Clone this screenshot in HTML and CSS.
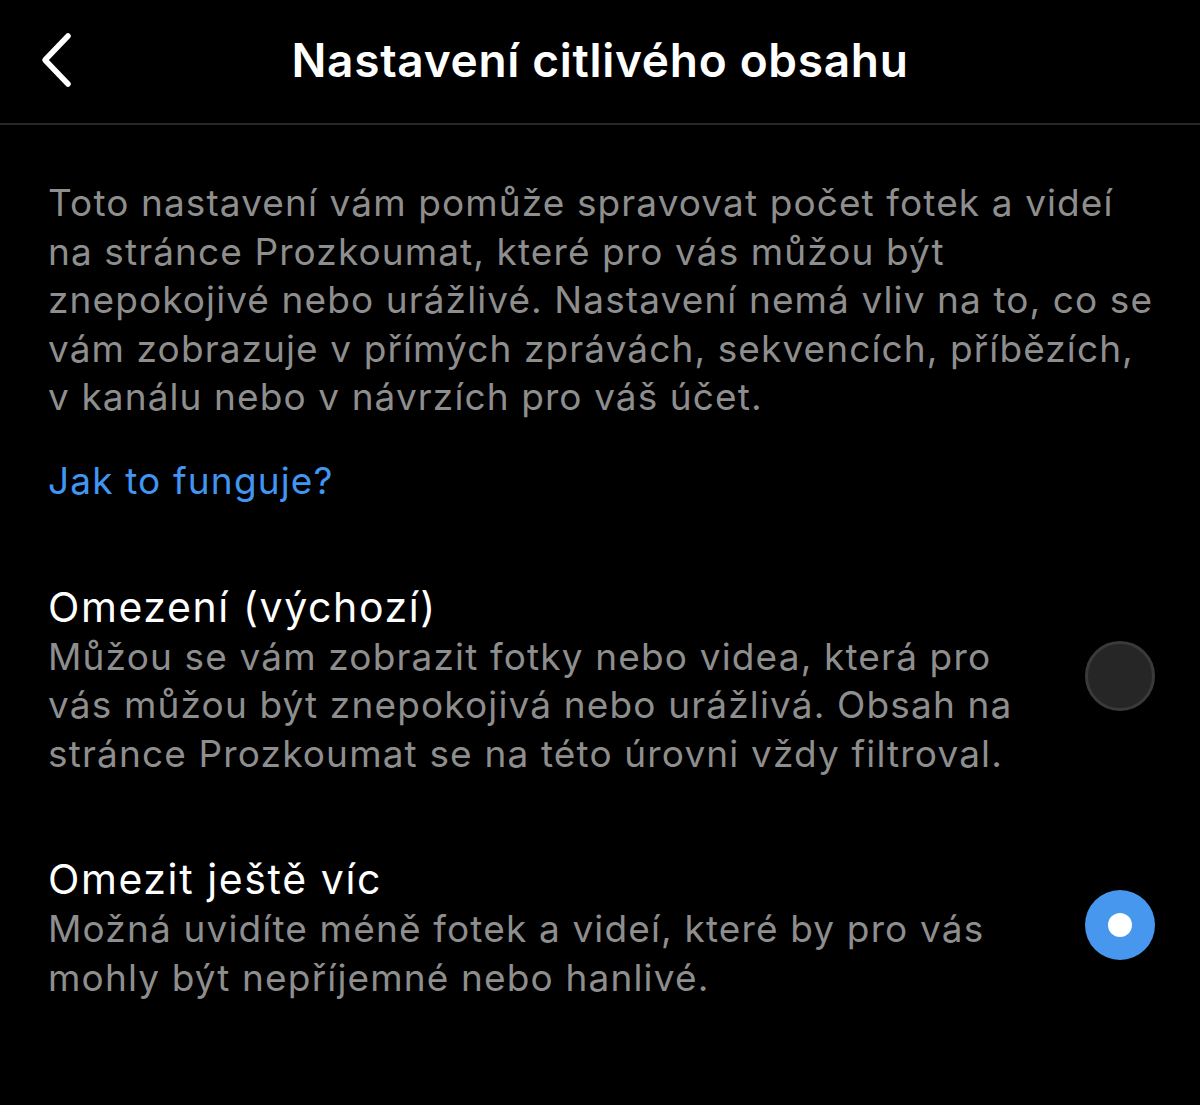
FILE: index.html
```html
<!DOCTYPE html>
<html lang="cs">
<head>
<meta charset="utf-8">
<link rel="stylesheet" href="styles.css">
</head>
<body>
<header class="topbar">
  <svg class="back" width="40" height="60" viewBox="0 0 40 60"><path d="M32 6 L9 30 L32 54" fill="none" stroke="#fff" stroke-width="5.5" stroke-linecap="round" stroke-linejoin="round"/></svg>
  <h1 class="title">Nastavení citlivého obsahu</h1>
</header>
<main class="content">
  <p class="intro">Toto nastavení vám pomůže spravovat počet fotek a videí<br>na stránce Prozkoumat, které pro vás můžou být<br>znepokojivé nebo urážlivé. Nastavení nemá vliv na to, co se<br>vám zobrazuje v přímých zprávách, sekvencích, příbězích,<br>v kanálu nebo v návrzích pro váš účet.</p>
  <a class="link">Jak to funguje?</a>
  <section class="option">
    <div class="option-text">
      <div class="option-title">Omezení (výchozí)</div>
      <div class="option-desc">Můžou se vám zobrazit fotky nebo videa, která pro<br>vás můžou být znepokojivá nebo urážlivá. Obsah na<br>stránce Prozkoumat se na této úrovni vždy filtroval.</div>
    </div>
    <div class="radio"></div>
  </section>
  <section class="option option-second">
    <div class="option-text">
      <div class="option-title">Omezit ještě víc</div>
      <div class="option-desc">Možná uvidíte méně fotek a videí, které by pro vás<br>mohly být nepříjemné nebo hanlivé.</div>
    </div>
    <div class="radio radio-on"></div>
  </section>
</main>
</body>
</html>
```
FILE: styles.css
```css
html, body {
  margin: 0;
  padding: 0;
  background: #000;
  height: 100%;
}
body {
  font-family: Inter, "Noto Sans", sans-serif;
  color: #fff;
  width: 1200px;
  height: 1105px;
  overflow: hidden;
}
.topbar {
  height: 125px;
  padding-bottom: 4px;
  border-bottom: 2px solid #262626;
  display: flex;
  align-items: center;
  justify-content: center;
  position: relative;
  box-sizing: border-box;
}
.back {
  position: absolute;
  left: 36px;
  top: 30px;
}
.title {
  margin: 0;
  font-size: 46px;
  font-weight: 600;
  letter-spacing: 0.7px;
  color: #fff;
}
.content {
  padding: 0 48px;
}
.intro {
  margin: 54px 0 0;
  font-size: 37px;
  letter-spacing: 1.1px;
  line-height: 48.5px;
  color: #8e8e8e;
  white-space: nowrap;
}
.link {
  display: block;
  margin-top: 35px;
  font-size: 37px;
  letter-spacing: 1.15px;
  line-height: 48px;
  color: #4096f0;
}
.option {
  display: flex;
  align-items: center;
  justify-content: space-between;
  margin-top: 76px;
}
.option-second {
  margin-top: 75px;
}
.option-title {
  font-size: 41px;
  letter-spacing: 1.6px;
  line-height: 52px;
  color: #fff;
}
.option-desc {
  font-size: 37px;
  letter-spacing: 1.15px;
  line-height: 48.5px;
  color: #8e8e8e;
  white-space: nowrap;
}
.radio {
  width: 70px;
  height: 70px;
  border-radius: 50%;
  box-sizing: border-box;
  background: #262626;
  border: 3px solid #3a3a3a;
  margin-right: -3px;
  margin-bottom: 6px;
}
.radio-on {
  background: #4797ee;
  border: none;
  display: flex;
  align-items: center;
  justify-content: center;
}
.radio-on::after {
  content: "";
  width: 24px;
  height: 24px;
  border-radius: 50%;
  background: #fff;
}
```
